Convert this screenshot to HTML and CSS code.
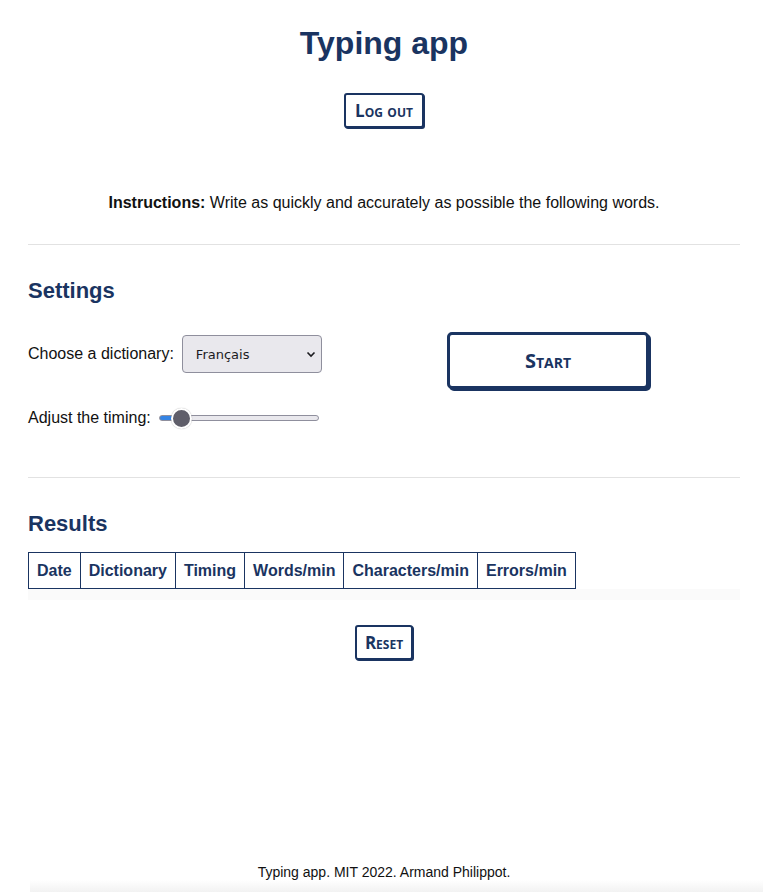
FILE: index.html
```html
<!DOCTYPE html>
<html lang="en">
<head>
<meta charset="utf-8">
<title>Typing app</title>
<link rel="stylesheet" href="styles.css">
</head>
<body>
<header class="header">
  <h1 class="title">Typing app</h1>
  <button class="btn btn-small" type="button">Log out</button>
</header>
<main class="main">
  <p class="instructions"><strong>Instructions:</strong> Write as quickly and accurately as possible the following words.</p>
  <hr class="sep">
  <section class="settings">
    <h2 class="heading">Settings</h2>
    <div class="settings-grid">
      <div class="fields">
        <div class="field">
          <label class="label" for="dict">Choose a dictionary:</label>
          <div class="select-wrap">
            <select class="select" id="dict"><option>Français</option></select>
            <svg class="chevron" width="10" height="7" viewBox="0 0 10 7"><path d="M1.5 1.5 L5 5 L8.5 1.5" fill="none" stroke="#1b1b1f" stroke-width="1.6"/></svg>
          </div>
        </div>
        <div class="field field-range">
          <label class="label" for="timing">Adjust the timing:</label>
          <input class="range" id="timing" type="range" min="0" max="100" value="8">
        </div>
      </div>
      <div class="start-col">
        <button class="btn btn-start" type="button">Start</button>
      </div>
    </div>
  </section>
  <hr class="sep sep-2">
  <section class="results">
    <h2 class="heading">Results</h2>
    <table class="table">
      <thead>
        <tr><th>Date</th><th>Dictionary</th><th>Timing</th><th>Words/min</th><th>Characters/min</th><th>Errors/min</th></tr>
      </thead>
    </table>
    <div class="table-body"></div>
    <div class="reset-row"><button class="btn btn-reset" type="button">Reset</button></div>
  </section>
</main>
<footer class="footer">
  <p class="footer-text">Typing app. MIT 2022. Armand Philippot.</p>
  <div class="footer-shadow"></div>
</footer>
</body>
</html>
```
FILE: styles.css
```css
* { box-sizing: border-box; }
html, body { margin: 0; padding: 0; }
body {
  min-height: 100vh;
  display: flex;
  flex-direction: column;
  padding: 0 23px 0 28px;
  font-family: "Liberation Sans", Arial, sans-serif;
  font-size: 16px;
  color: #111;
  background: #fff;
}
.header {
  display: flex;
  flex-direction: column;
  align-items: center;
}
.title {
  margin: 24px 0 31px;
  font-size: 32px;
  line-height: 38px;
  font-weight: 700;
  color: #1a3461;
}
.btn {
  font-family: "Open Sans", "Noto Sans", sans-serif;
  font-variant: small-caps;
  font-weight: 700;
  color: #1a3461;
  background: #fff;
  border: 2px solid #1a3461;
  border-radius: 3px;
  box-shadow: 1px 1px 0 #1a3461;
  cursor: pointer;
  padding: 0;
}
.btn-small {
  width: 80px;
  height: 35px;
  font-size: 17px;
  line-height: 1;
}
.instructions {
  margin: 65px 0 31px;
  text-align: center;
  line-height: 20px;
}
.sep {
  margin: 0;
  border: 0;
  border-top: 1px solid #e2e2e2;
}
.heading {
  margin: 32px 0 0;
  font-size: 22px;
  line-height: 28px;
  color: #1a3461;
}
.settings-grid {
  display: grid;
  grid-template-columns: 1fr 1fr;
  margin-top: 27px;
}
.fields {
  display: flex;
  flex-direction: column;
  padding-top: 3px;
  gap: 35px;
}
.field {
  display: flex;
  align-items: center;
  gap: 8px;
}
.label { line-height: 20px; }
.select-wrap {
  position: relative;
  display: inline-flex;
}
.select {
  appearance: none;
  -webkit-appearance: none;
  width: 140px;
  height: 38px;
  padding: 0 24px 0 13px;
  background: #e9e8ed;
  border: 1px solid #8f8f9d;
  border-radius: 4px;
  font-family: "DejaVu Sans", "Noto Sans", sans-serif;
  font-size: 13px;
  color: #1b1b1f;
}
.chevron {
  position: absolute;
  right: 6px;
  top: 16px;
  pointer-events: none;
}
.range {
  -webkit-appearance: none;
  appearance: none;
  width: 160px;
  height: 6px;
  margin: 0;
  border-radius: 3px;
  border: 1px solid #8f8f9d;
  background: linear-gradient(to right, #3584e4 0 12%, #e9e8ed 12% 100%);
}
.range::-webkit-slider-thumb {
  -webkit-appearance: none;
  appearance: none;
  width: 21px;
  height: 21px;
  border-radius: 50%;
  background: #5f5e6a;
  border: 2px solid #fff;
  box-shadow: 0 0 1px rgba(0,0,0,0.35);
}
.start-col {
  display: flex;
  justify-content: center;
  padding-right: 28px;
}
.btn-start {
  width: 202px;
  height: 57px;
  border-width: 3px;
  border-radius: 5px;
  box-shadow: 2px 2px 0 #1a3461;
  font-size: 20px;
}
.sep-2 { margin-top: 49px; }
.table {
  margin-top: 14px;
  border-collapse: collapse;
  border: 1px solid #1a3461;
}
.table th {
  border: 1px solid #1a3461;
  padding: 8px 8px;
  font-size: 16px;
  line-height: 19px;
  color: #1a3461;
  font-weight: 700;
}
.table-body {
  height: 11px;
  background: #fafafa;
}
.reset-row {
  display: flex;
  justify-content: center;
  margin-top: 25px;
}
.btn-reset {
  width: 58px;
  height: 35px;
  font-size: 17px;
}
.footer {
  margin-top: auto;
  display: flex;
  flex-direction: column;
  align-items: center;
}
.footer-text {
  margin: 0 0 -2px;
  font-family: "Liberation Sans", sans-serif;
  font-size: 14px;
  line-height: 20px;
  color: #111;
}
.footer-shadow {
  align-self: stretch;
  margin: 0 -23px 0 2px;
  height: 12px;
  background: linear-gradient(to bottom, #ffffff, #f2f2f2);
}
```
